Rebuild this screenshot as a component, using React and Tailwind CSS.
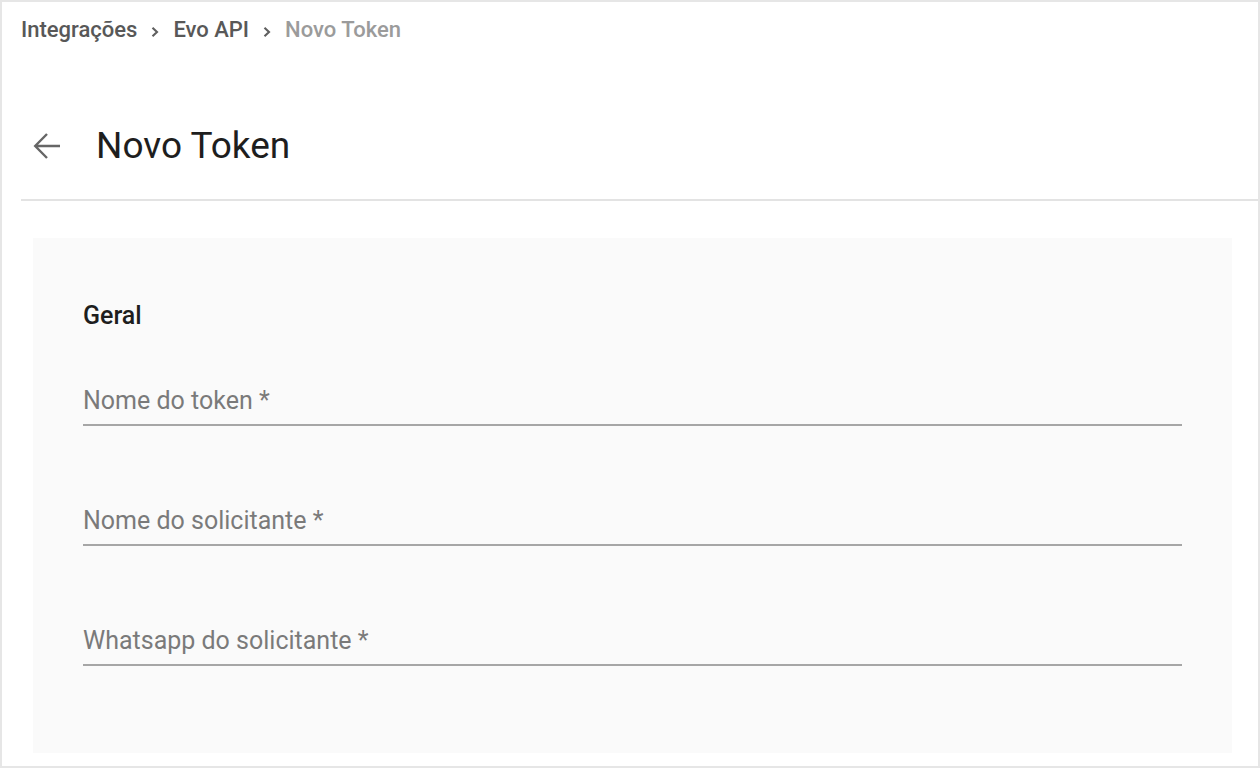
import React from "react";

function Chevron() {
  return (
    <svg width="10" height="12" viewBox="0 0 10 12" className="mx-[13px] mt-[4px] shrink-0" fill="none">
      <path d="M2.5 1.8 L7 6 L2.5 10.2" stroke="#5f5f5f" strokeWidth="2.1" />
    </svg>
  );
}

function Field({ label, className }) {
  return (
    <div className={className}>
      <div className="h-[30px] text-[25px] leading-[30px] text-[#7a7a7a]">{label}</div>
      <div className="mt-[8px] h-[2px] bg-[#a6a6a6]" />
    </div>
  );
}

export default function App() {
  return (
    <div className="w-[1260px] h-[768px] border-2 border-[#e6e6e6] bg-white font-['Roboto','Liberation_Sans',sans-serif] overflow-hidden">
      <div className="pl-[19px]">
        <div className="mt-[15px] h-[26px] flex items-center text-[22px] leading-[26px] font-medium">
          <span className="text-[#585858]">Integrações</span>
          <Chevron />
          <span className="text-[#585858]">Evo API</span>
          <Chevron />
          <span className="text-[#9b9b9b]">Novo Token</span>
        </div>
        <div className="mt-[82px] h-[42px] flex items-center">
          <svg width="28" height="28" viewBox="0 0 28 28" className="ml-[12px] shrink-0" fill="none">
            <path d="M27 14 H2.5 M14 2 L2.2 14 L14 26" stroke="#666666" strokeWidth="2.4" />
          </svg>
          <span className="ml-[35px] text-[37px] leading-[42px] text-[#1e1e1e]">Novo Token</span>
        </div>
        <div className="mt-[32px] h-[2px] bg-[#e3e3e3]" />
      </div>
      <div className="ml-[31px] mt-[37px] w-[1199px] h-[515px] bg-[#fafafa] px-[50px] pt-[63px]">
        <div className="h-[30px] text-[25px] leading-[30px] font-medium text-[#1e1e1e]">Geral</div>
        <Field className="mt-[55px]" label="Nome do token *" />
        <Field className="mt-[80px]" label="Nome do solicitante *" />
        <Field className="mt-[80px]" label="Whatsapp do solicitante *" />
      </div>
    </div>
  );
}
